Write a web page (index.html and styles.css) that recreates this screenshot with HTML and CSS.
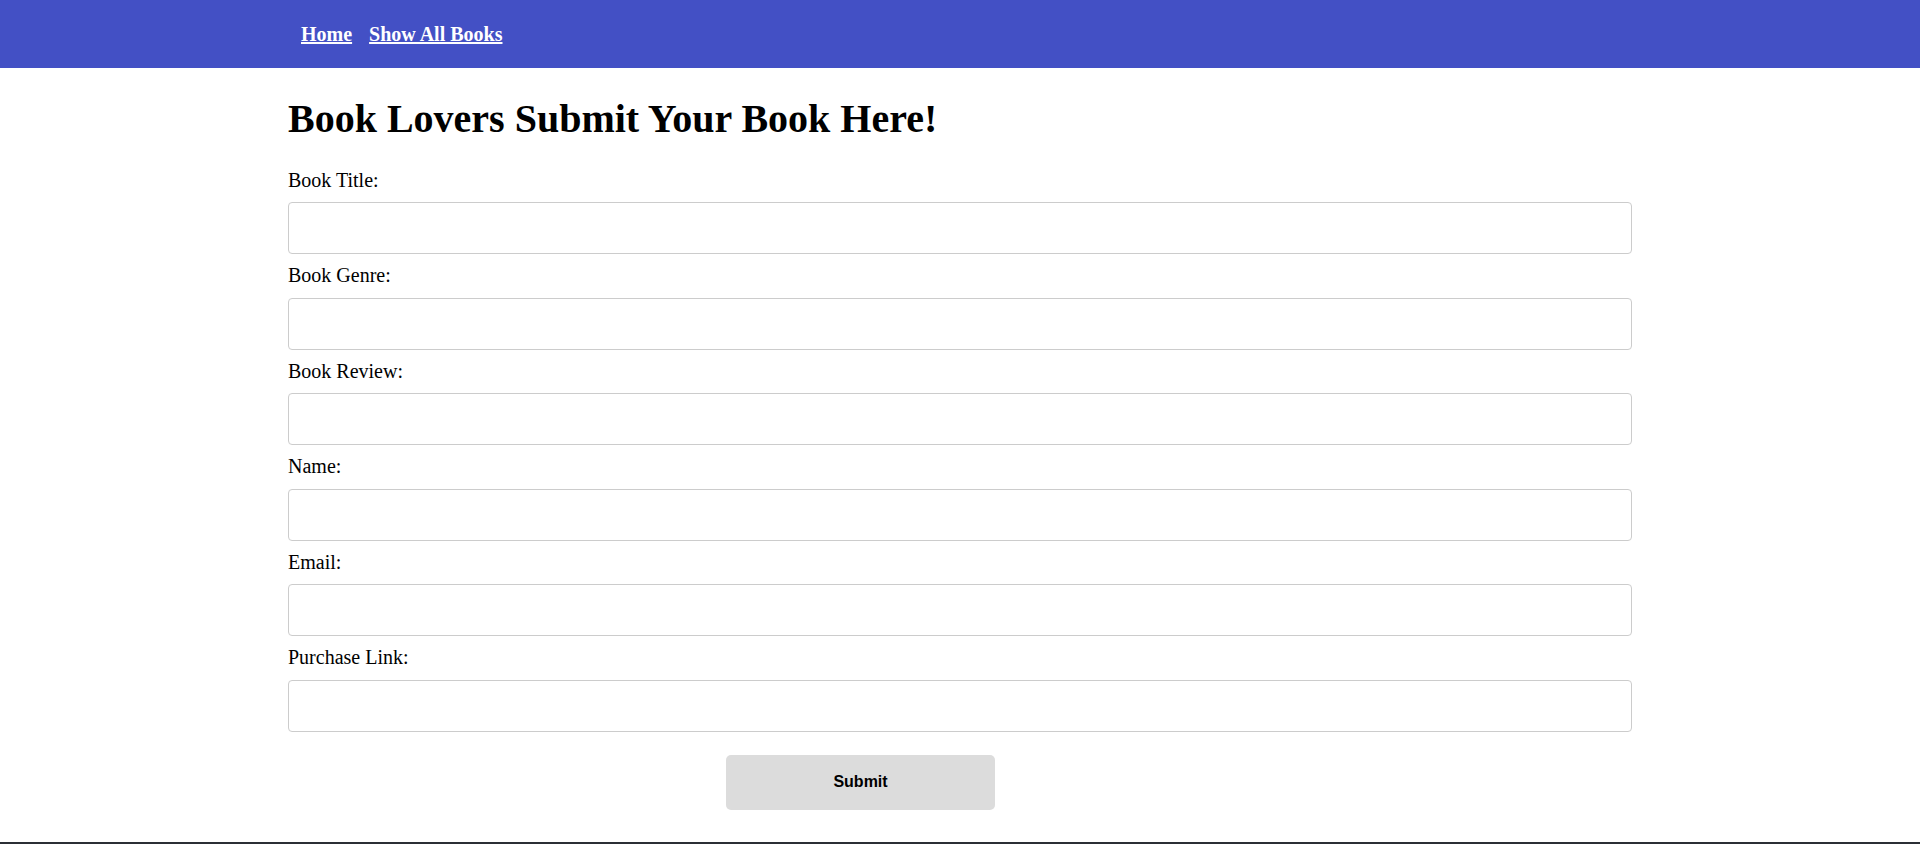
FILE: index.html
```html
<!DOCTYPE html>
<html lang="en">
<head>
<meta charset="utf-8">
<title>Book Lovers</title>
<link rel="stylesheet" href="styles.css">
</head>
<body>
<nav class="navbar">
  <div class="nav-inner">
    <a class="nav-link" href="#">Home</a>
    <a class="nav-link" href="#">Show All Books</a>
  </div>
</nav>
<main class="container">
  <h1 class="title">Book Lovers Submit Your Book Here!</h1>
  <form class="book-form">
    <label class="field-label" for="title">Book Title:</label>
    <input class="field-input" id="title" type="text">
    <label class="field-label" for="genre">Book Genre:</label>
    <input class="field-input" id="genre" type="text">
    <label class="field-label" for="review">Book Review:</label>
    <input class="field-input" id="review" type="text">
    <label class="field-label" for="name">Name:</label>
    <input class="field-input" id="name" type="text">
    <label class="field-label" for="email">Email:</label>
    <input class="field-input" id="email" type="text">
    <label class="field-label" for="link">Purchase Link:</label>
    <input class="field-input" id="link" type="text">
    <button class="submit-btn" type="button">Submit</button>
  </form>
</main>
<footer class="footer"></footer>
</body>
</html>
```

FILE: styles.css
```css
html, body {
  margin: 0;
  padding: 0;
  background: #ffffff;
  font-family: "Liberation Serif", "Times New Roman", serif;
  color: #000;
}

.navbar {
  background: #4350c5;
  height: 68px;
  display: flex;
  align-items: center;
}

.nav-inner {
  width: 70%;
  margin: 0 auto;
  padding-left: 13px;
  box-sizing: border-box;
  display: flex;
  gap: 17px;
}

.nav-link {
  color: #ffffff;
  font-weight: bold;
  font-size: 20px;
  text-decoration: underline;
}

.container {
  width: 70%;
  margin: 0 auto;
}

.title {
  font-size: 40px;
  font-weight: bold;
  margin: 26.8px 0;
}

.book-form {
  display: flex;
  flex-direction: column;
  align-items: stretch;
}

.field-label {
  display: block;
  font-size: 20px;
  line-height: 23.5px;
}

.field-input {
  display: block;
  height: 52px;
  box-sizing: border-box;
  margin: 10px 0;
  border: 1px solid #cccccc;
  border-radius: 4px;
  background: #fff;
  font-size: 16px;
  padding: 0 12px;
}

.submit-btn {
  align-self: flex-start;
  width: 20%;
  height: 55px;
  margin: 13px 0 0 32.6%;
  background: #dcdcdc;
  border: none;
  border-radius: 5px;
  font-family: "Liberation Sans", Arial, sans-serif;
  font-weight: bold;
  font-size: 16px;
  color: #000;
}

.footer {
  margin-top: 32px;
  height: 40px;
  background: #2b2f35;
}
```
